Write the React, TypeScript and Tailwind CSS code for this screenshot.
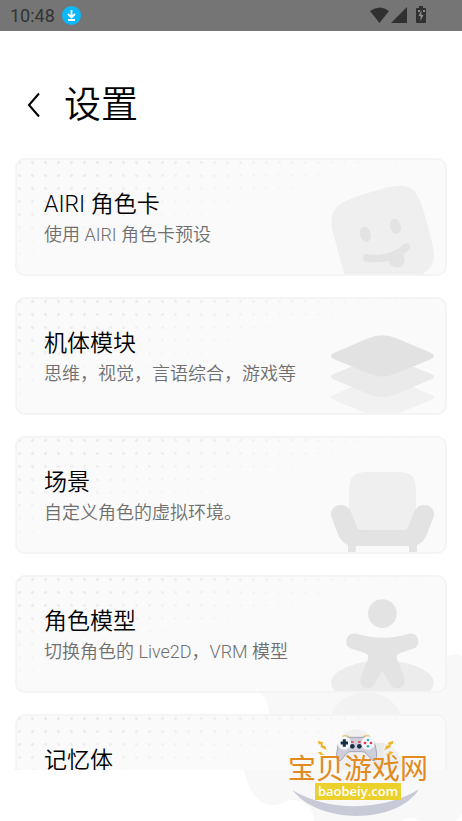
import React from 'react';

const items = [
  { title: 'AIRI 角色卡', description: '使用 AIRI 角色卡预设', icon: <FaceIcon /> },
  { title: '机体模块', description: '思维，视觉，言语综合，游戏等', icon: <LayersIcon /> },
  { title: '场景', description: '自定义角色的虚拟环境。', icon: <ArmchairIcon /> },
  { title: '角色模型', description: '切换角色的 Live2D，VRM 模型', icon: <PersonIcon /> },
  { title: '记忆体', description: '', icon: <MemoryIcon /> },
];

function FaceIcon() {
  return (
    <svg viewBox="282 51 360 324" className="h-full w-full">
      <path fill="#efefef" d="M345 395 L308 258 C292 197 304 172 360 149 C400 134 450 120 490 112 C535 105 557 122 572 168 C587 215 600 262 607 300 C614 335 602 360 573 376 L520 395 Z" />
      <ellipse cx="403" cy="256" rx="16" ry="23" transform="rotate(-14 403 256)" fill="#e3e3e3" />
      <ellipse cx="493" cy="232" rx="16" ry="23" transform="rotate(-14 493 232)" fill="#e3e3e3" />
      <path d="M407 326 C450 333 492 325 526 294" fill="none" stroke="#e3e3e3" strokeWidth="23" strokeLinecap="round" />
      <path fill="#e3e3e3" d="M472 334 L517 316 C524 334 521 349 506 354 C490 358 476 350 472 334 Z" />
    </svg>
  );
}

function LayersIcon() {
  return (
    <svg viewBox="282 47 360 324" className="h-full w-full">
      <path fill="#f1f1f1" d="M412 273 Q454 249 496 273 L594 313 Q624 324 594 335 L496 374 Q454 396 412 374 L315 335 Q285 324 315 313 Z" />
      <path fill="#eaeaea" d="M412 211 Q454 187 496 211 L594 251 Q624 262 594 273 L496 314 Q454 333 412 314 L315 273 Q285 262 315 251 Z" />
      <path fill="#e2e2e2" d="M412 147 Q454 129 496 147 L594 188 Q624 200 594 212 L496 252 Q454 271 412 252 L315 212 Q285 200 315 188 Z" />
    </svg>
  );
}

function ArmchairIcon() {
  return (
    <svg viewBox="282 42 360 324" className="h-full w-full">
      <path fill="#efefef" d="M354 300 V184 C354 139 368 126 412 126 H498 C542 126 555 139 555 184 V300 Z" />
      <path fill="#e3e3e3" d="M302 263 C294 242 309 225 330 225 C345 225 355 234 361 248 L376 287 Q381 300 393 300 H516 Q528 300 533 287 L548 248 C554 234 564 225 579 225 C600 225 615 242 607 263 L588 312 Q579 336 558 346 V366 H534 V348 H374 V366 H351 V346 Q330 336 321 312 Z" />
    </svg>
  );
}

function PersonIcon() {
  return (
    <svg viewBox="282 52 360 324" className="h-full w-full">
      <ellipse cx="454" cy="352" rx="154" ry="67" fill="#ececec" />
      <circle cx="454" cy="144" r="43" fill="#e3e3e3" />
      <path fill="#e3e3e3" d="M376 204 C430 220 480 220 534 204 C550 201 562 211 562 228 C562 240 555 246 546 249 L509 261 Q494 266 498 280 L520 336 C525 354 514 368 499 368 C487 368 481 362 477 354 L454 314 L431 354 C427 362 421 368 409 368 C394 368 384 354 389 336 L411 280 Q415 266 400 261 L362 249 C353 246 346 240 346 228 C346 211 359 200 376 204 Z" />
    </svg>
  );
}

function MemoryIcon() {
  return (
    <svg viewBox="309 243 360 324" className="h-full w-full">
      <path fill="#f0f0f0" d="M345 420 V322 C345 290 370 265 402 265 C434 265 458 290 458 322 V420 Z" />
      <path fill="#e9e9e9" d="M458 420 V305 H485 V420 Z" />
      <path fill="#f0f0f0" d="M485 420 V305 C512 310 530 333 538 360 V420 Z" />
    </svg>
  );
}

function Backdrop() {
  return (
    <svg viewBox="240 650 222 171" className="absolute right-0 bottom-0 w-[222px]" aria-hidden="true">
      <path fill="#f8f8f8" d="M462 656 C456 653 448 655 442 659 L360 670 L257 692 C264 695 269 702 269 714 L244 740 V770 C247 784 254 805 273 805 C282 805 285 800 294 800 C307 801 314 810 314 821 H401 C407 817 415 817 421 821 H455 Q461 818 462 812 Z" />
      <circle cx="366" cy="731" r="39" fill="#f2f2f2" />
    </svg>
  );
}

function StatusBar() {
  return (
    <header className="flex h-[31px] shrink-0 items-center justify-between bg-[#757575] pr-[35px] pl-[10px]">
      <div className="flex items-center gap-[7px]">
        <time className="font-['Roboto',sans-serif] text-[18px] leading-[31px] text-[#333]">10:48</time>
        <svg viewBox="0 0 19 19" className="h-[19px] w-[19px]" aria-hidden="true">
          <circle cx="9.500" cy="9.500" r="9.500" fill="#0ab9fb" />
          <path d="M9.500 4V10.500 M6 8L9.500 11.500L13 8 M6 14H13" fill="none" stroke="#fff" strokeWidth="1.800" />
        </svg>
      </div>
      <svg viewBox="0 0 57 19" className="h-[19px] w-[57px]" aria-hidden="true">
        <path fill="#303030" d="M0 5 Q10 -2 19 5 L9.500 17 Z" />
        <path fill="#303030" d="M37 1 V17 H21 Z" />
        <path fill="#303030" d="M49 0 H53 V2 H55 Q56 2 56 3 V16 Q56 17 55 17 H47 Q46 17 46 16 V3 Q46 2 47 2 H49 Z" />
        <path fill="#8a8a8a" d="M51.500 4 L48.500 10 H50.500 V15 L53.500 9 H51.500 Z M48 4H50V6H48Z M53 4H55V6H53Z" />
      </svg>
    </header>
  );
}

function Watermark() {
  return (
    <div className="absolute right-[34px] bottom-[4px] flex h-[84px] w-[140px] flex-col items-center">
      <svg viewBox="18 15 420 252" className="absolute inset-0 h-full w-full" aria-hidden="true">
        <path fill="#c9cad8" d="M32 187 C140 251 300 251 411 184 C345 290 110 290 32 187 Z" />
        <path fill="none" stroke="#e3b94a" strokeWidth="4" d="M181 26 Q190 21 200 26 M244 26 Q254 21 264 26" />
        <path fill="#cfcfdc" stroke="#85859b" strokeWidth="2" d="M184 28 H262 C274 30 280 48 283 70 C286 92 280 102 271 97 L253 77 Q248 71 240 71 H206 Q198 71 193 77 L177 97 C167 102 161 92 165 70 C168 46 173 30 184 28 Z" />
        <circle cx="187" cy="45" r="20" fill="#f7f7fb" />
        <circle cx="258" cy="45" r="20" fill="#f7f7fb" />
        <path d="M187 34V56 M176 45H198" stroke="#17304a" strokeWidth="9" />
        <circle cx="211" cy="55" r="7" fill="#17304a" />
        <circle cx="232" cy="55" r="7" fill="#17304a" />
        <path fill="#d8394c" d="M207 40h8v4h-8z M228 40h8v4h-8z" />
        <circle cx="258" cy="36" r="4" fill="#2fb3c8" />
        <circle cx="258" cy="55" r="4" fill="#2fb3c8" />
        <circle cx="249" cy="45" r="4" fill="#e0354a" />
        <circle cx="267" cy="45" r="4" fill="#e0354a" />
        <path fill="#f0b429" d="M107 38 L123 43 L121 52 L130 54 L134 67 L116 57 L117 50 L110 48 Z M105 74 L117 71 L119 75 L128 80 L113 80 L112 76 Z" />
        <path fill="#f0b429" d="M335 38 L318 44 L320 52 L312 54 L307 67 L326 57 L325 50 L332 48 Z M336 73 L323 70 L320 75 L311 81 L327 80 L329 76 Z" />
      </svg>
      <p className="relative mt-[24px] text-[28px] leading-[26px] font-normal whitespace-nowrap text-[#e28a20]">宝贝游戏网</p>
      <p className="relative w-[86px] bg-[#ecd02c] text-center font-['Open_Sans',sans-serif] text-[13px] leading-[17px] font-semibold text-white">baobeiy.com</p>
    </div>
  );
}

export default function App() {
  return (
    <div className="relative isolate flex h-screen flex-col overflow-hidden bg-white pb-[51px] font-['Roboto','Noto_Sans_CJK_SC',sans-serif] text-black">
      <div className="absolute inset-0 -z-10">
        <Backdrop />
      </div>

      <StatusBar />

      {/* Page title */}
      <div className="flex shrink-0 items-center gap-[24px] px-[27px] pt-[48px] pb-[27px]">
        <button type="button" aria-label="返回">
          <svg viewBox="0 0 13 26" className="h-[26px] w-[13px]">
            <path d="M12 1.500 L2 13 L12 24.500" fill="none" stroke="#000" strokeWidth="2" />
          </svg>
        </button>
        <h1 className="text-[37px] leading-[54px] -mb-[2px] font-[350]">设置</h1>
      </div>

      {/* Settings list */}
      <nav className="flex min-h-0 flex-1 flex-col gap-[21px] overflow-hidden px-[15px]">
        {items.map((item) => (
          <a key={item.title} href="#" className="relative block min-h-[118px] shrink-0 overflow-hidden rounded-[10px] border-2 border-[#f4f4f4] bg-[#fafafa] px-[27px] pt-[29px] pb-[25px]">
            <div className="absolute inset-0 bg-[radial-gradient(circle,#ebebeb_1px,transparent_2px)] bg-[size:13px_13px] bg-[position:-4px_-4px] [mask-image:linear-gradient(165deg,#000_15%,transparent_50%)]"></div>
            <div className="absolute right-0 bottom-0 h-[108px] w-[120px]">{item.icon}</div>
            <h2 className="relative text-[23px] leading-[32px] font-[350]">{item.title}</h2>
            {item.description && <p className="relative text-[18px] leading-[28px] font-[350] text-[#6f6f6f]">{item.description}</p>}
          </a>
        ))}
      </nav>

      <Watermark />
    </div>
  );
}
